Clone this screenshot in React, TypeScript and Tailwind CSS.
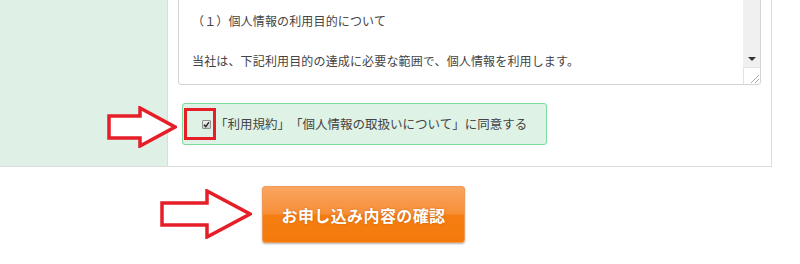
import React from "react";

function Arrow({ className, w, h, neck, tail }: { className: string; w: number; h: number; neck: number; tail: number }) {
    // outline arrow pointing right, white fill with red stroke
    const cy = h / 2;
    const pts = [
        [2, cy - tail / 2],
        [neck, cy - tail / 2],
        [neck, 2],
        [w - 2, cy],
        [neck, h - 2],
        [neck, cy + tail / 2],
        [2, cy + tail / 2],
    ]
        .map((p) => p.join(","))
        .join(" ");
    return (
        <svg className={className} width={w} height={h} viewBox={`0 0 ${w} ${h}`}>
            <polygon points={pts} fill="#fff" stroke="#e61e28" strokeWidth="3.5" strokeLinejoin="miter" />
        </svg>
    );
}

export default function App() {
    return (
        <div className="relative w-[800px] h-[264px] overflow-hidden bg-white font-['Noto_Sans_CJK_JP','Noto_Sans',sans-serif] text-[#444] [text-spacing-trim:space-all]">
            {/* form row */}
            <div className="flex w-[772px] h-[167px] border-b border-[#dcdcdc]">
                <div className="w-[168px] shrink-0 bg-[#dff1e6] border-r border-[#dcdcdc]" />
                <div className="flex-1 border-r border-[#dcdcdc] px-[10px]">
                    {/* textarea */}
                    <div className="flex -mt-[10px] h-[95px] border border-[#d4d4d4] rounded-b-[3px] bg-white overflow-hidden">
                        <div className="flex-1 pt-[20px] pl-[13px] text-[12px] leading-[20px] tracking-[0.15px]">
                            <p>（１）個人情報の利用目的について</p>
                            <p>&nbsp;</p>
                            <p>当社は、下記利用目的の達成に必要な範囲で、個人情報を利用します。</p>
                        </div>
                        <div className="w-[17px] flex flex-col bg-[#f0f0f0]">
                            <div className="flex-1 flex items-end justify-center pb-[6px]">
                                <div className="w-0 h-0 border-l-[4px] border-r-[4px] border-t-[4px] border-l-transparent border-r-transparent border-t-[#333]" />
                            </div>
                            <div className="h-[17px] bg-white border-l border-t border-[#e2e2e2] flex items-end justify-end">
                                <svg width="12" height="12" viewBox="0 0 12 12">
                                    <path d="M11 3 L3 11 M11 7 L7 11" stroke="#aaa" strokeWidth="1" />
                                </svg>
                            </div>
                        </div>
                    </div>
                    {/* agreement */}
                    <div className="mt-[18px] ml-[4px] w-[365px] h-[42px] flex items-center border border-[#7cdb9f] rounded-[3px] bg-[#dff2e6]">
                        <div className="ml-[19px] w-[9px] h-[9px] border border-[#8f8f8f] rounded-[1px] bg-gradient-to-b from-[#f2f2f2] to-[#cfcfcf] flex items-center justify-center">
                            <svg width="7" height="7" viewBox="0 0 7 7">
                                <path d="M1 3.8 L2.8 5.6 L6 1.2" stroke="#222" strokeWidth="1.4" fill="none" />
                            </svg>
                        </div>
                        <span className="ml-[4px] text-[12.5px] leading-none text-[#444]">「利用規約」「個人情報の取扱いについて」に同意する</span>
                    </div>
                </div>
            </div>

            {/* submit */}
            <div className="mt-[19px] ml-[262px]">
                <button className="w-[203px] h-[57px] rounded-[3px] border border-[#ef9a5a] bg-[linear-gradient(to_bottom,#f9a560_0%,#f78f38_48%,#f57e12_52%,#f47a0b_100%)] shadow-[0_1px_2px_rgba(0,0,0,0.3)] text-white text-[16px] font-bold tracking-[0.4px] [text-shadow:0_0_2px_rgba(150,60,0,0.5)]">
                    お申し込み内容の確認
                </button>
            </div>

            {/* annotations */}
            <div className="absolute left-[184px] top-[108px] w-[32px] h-[32px] border-[3.5px] border-[#e61e28]" />
            <Arrow className="absolute left-[107px] top-[106px]" w={70} h={42} neck={33} tail={22} />
            <Arrow className="absolute left-[160px] top-[189px]" w={92} h={50} neck={47} tail={22} />
        </div>
    );
}
